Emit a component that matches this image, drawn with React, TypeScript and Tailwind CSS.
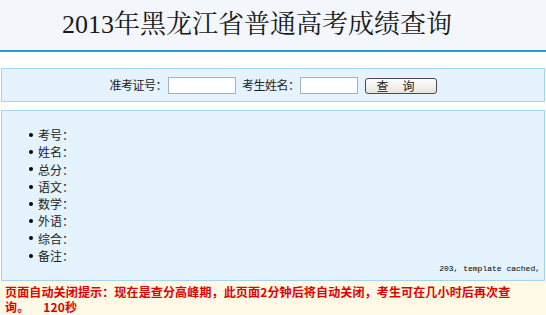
import React from "react";

const items = ["考号：", "姓名：", "总分：", "语文：", "数学：", "外语：", "综合：", "备注："];

export default function App() {
  return (
    <div className="w-[546px] h-[315px] overflow-hidden bg-white" style={{ fontFamily: '"Noto Sans CJK SC", sans-serif' }}>
      <div className="h-[52px] bg-[#f3f7fb] border-b-2 border-[#3893c6] flex items-center justify-center pr-[32px]">
        <h1
          className="text-[26px] leading-[30px] text-[#1a1a1a] font-normal"
          style={{ fontFamily: '"Liberation Serif", "Noto Serif CJK SC", "Noto Sans CJK SC", serif' }}
        >
          2013年黑龙江省普通高考成绩查询
        </h1>
      </div>

      <div className="mt-[16px] mx-px h-[34px] bg-[#e4f3fd] border border-[#a6d4f0] flex items-center justify-center text-[12px] text-[#222]">
        <span className="tracking-[-0.5px] leading-[16px]">准考证号：</span>
        <div className="ml-px w-[68px] h-[17px] bg-white border border-[#a3b1bd]" />
        <span className="ml-[6px] tracking-[-0.5px] leading-[16px]">考生姓名：</span>
        <div className="w-[58px] h-[17px] bg-white border border-[#a3b1bd]" />
        <div className="ml-[7px] w-[72px] h-[16px] mt-[2px] rounded-[3px] border border-[#4a4a4a] bg-gradient-to-b from-white to-[#e6e4dc] flex items-center pl-[11px] gap-[14px] leading-[14px]">
          <span>查</span>
          <span>询</span>
        </div>
      </div>

      <div className="mt-[8px] mx-px h-[171px] bg-[#e4f3fd] border border-[#a6d4f0] flex flex-col text-[12px] text-[#222]">
        <ul className="pt-[15px] pl-[27px]">
          {items.map((t) => (
            <li key={t} className="flex items-center h-[17.3px] leading-[17.3px]">
              <span className="w-[4px] h-[4px] rounded-full bg-black mr-[5px]" />
              <span>{t}</span>
            </li>
          ))}
        </ul>
        <div
          className="mt-auto pb-[7px] pr-[4px] text-right text-[8px] leading-[10px] text-black"
          style={{ fontFamily: '"Liberation Mono", monospace' }}
        >
          203, template cached,
        </div>
      </div>

      <div className="h-[34px] bg-[#fffae6] pt-[3px] pl-[5px] text-[12px] leading-[15px] font-bold text-[#e00000] tracking-[0.15px]">
        <div>页面自动关闭提示：现在是查分高峰期，此页面2分钟后将自动关闭，考生可在几小时后再次查</div>
        <div>
          询。<span className="ml-[14px]">120秒</span>
        </div>
      </div>
    </div>
  );
}
